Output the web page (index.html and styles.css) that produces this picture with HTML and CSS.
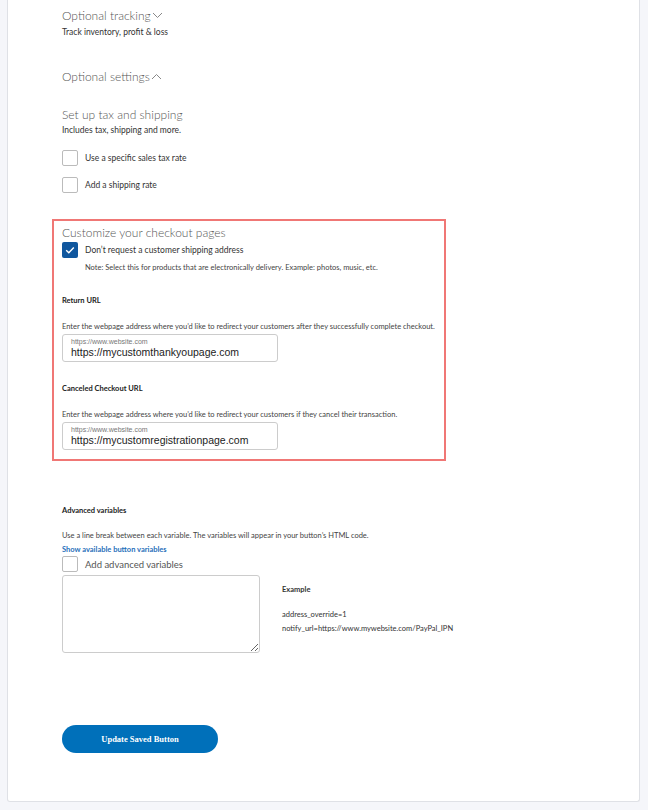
FILE: index.html
```html
<!DOCTYPE html>
<html lang="en">
<head>
  <meta charset="UTF-8" />
  <title>Edit Saved Button</title>
  <meta name="viewport" content="width=device-width, initial-scale=1.0" />
  <link rel="stylesheet" href="styles.css">
</head>
<body>
  <div class="card">
    <div class="toggle-title">Optional tracking
      <svg class="chevron" width="11" height="7" viewBox="0 0 11 7"><path d="M1 1l4.5 4.5L10 1" fill="none" stroke="#888" stroke-width="1"/></svg>
    </div>
    <div class="toggle-sub">Track inventory, profit &amp; loss</div>

    <div class="toggle-title second">Optional settings
      <svg class="chevron" width="11" height="7" viewBox="0 0 11 7"><path d="M1 6l4.5-4.5L10 6" fill="none" stroke="#888" stroke-width="1"/></svg>
    </div>

    <div class="section-title tax">Set up tax and shipping</div>
    <div class="section-sub">Includes tax, shipping and more.</div>

    <label class="check-row first-check"><span class="box"></span>Use a specific sales tax rate</label>
    <label class="check-row second-check"><span class="box"></span>Add a shipping rate</label>

    <div class="highlight">
      <div class="section-title">Customize your checkout pages</div>
      <label class="check-row checked-row">
        <span class="box checked">
          <svg width="16" height="16" viewBox="0 0 16 16"><path d="M4.2 8.3l2.6 2.5 5-5.4" fill="none" stroke="#fff" stroke-width="1.4"/></svg>
        </span>Don’t request a customer shipping address
      </label>
      <div class="note">Note: Select this for products that are electronically delivery. Example: photos, music, etc.</div>

      <div class="field-label">Return URL</div>
      <div class="field-desc">Enter the webpage address where you’d like to redirect your customers after they successfully complete checkout.</div>
      <div class="url-input">
        <span class="url-hint">https://www.website.com</span>
        <span class="url-value">https://mycustomthankyoupage.com</span>
      </div>

      <div class="field-label">Canceled Checkout URL</div>
      <div class="field-desc">Enter the webpage address where you’d like to redirect your customers if they cancel their transaction.</div>
      <div class="url-input">
        <span class="url-hint">https://www.website.com</span>
        <span class="url-value">https://mycustomregistrationpage.com</span>
      </div>
    </div>

    <div class="field-label advanced">Advanced variables</div>
    <div class="field-desc adv-desc">Use a line break between each variable. The variables will appear in your button’s HTML code.</div>
    <a class="vars-link" href="#">Show available button variables</a>
    <label class="check-row adv-check"><span class="box"></span>Add advanced variables</label>

    <div class="vars">
      <textarea class="vars-box"></textarea>
      <div class="example">
        <div class="example-title">Example</div>
        <div class="example-line first-line">address_override=1</div>
        <div class="example-line">notify_url=https://www.mywebsite.com/PayPal_IPN</div>
      </div>
    </div>

    <button type="button" class="save-btn">Update Saved Button</button>
  </div>
</body>
</html>
```

FILE: styles.css
```css
body {
  margin: 0;
  background: #f5f6fa;
  font-family: Lato, "Open Sans", sans-serif;
  color: #333;
}

.card {
  margin: 0 8px 7px 7px;
  padding: 8px 0 48px 54px;
  background: #fff;
  border: 1px solid #dfe1e6;
  border-top: none;
  border-radius: 0 0 3px 3px;
}

.toggle-title,
.section-title {
  font-size: 12px;
  font-weight: 300;
  line-height: 16px;
  color: #555;
}

.chevron {
  vertical-align: 1px;
  margin-left: -2px;
}

.toggle-title.second {
  margin-top: 31px;
}

.toggle-sub,
.section-sub {
  font-size: 8.5px;
  line-height: 12px;
  margin-top: 2px;
  color: #333;
}

.section-title.tax {
  margin-top: 22px;
}

.section-sub {
  margin-top: 1px;
}

.check-row {
  display: flex;
  align-items: center;
  height: 16px;
  font-size: 8.5px;
  color: #333;
}

.box {
  width: 14px;
  height: 14px;
  border: 1px solid #bbb;
  border-radius: 2px;
  margin-right: 7px;
  flex-shrink: 0;
}

.box.checked {
  width: 16px;
  height: 16px;
  border: none;
  background: #10579e;
}

.first-check {
  margin-top: 14px;
}

.second-check {
  margin-top: 11px;
}

.highlight {
  margin: 26px 0 0 -10px;
  width: 374px;
  padding: 4px 8px 9px 8px;
  border: 2px solid #f07775;
}

.checked-row {
  margin-top: 1px;
}

.note {
  font-size: 7.5px;
  line-height: 12px;
  margin: 4px 0 0 23px;
  color: #444;
}

.field-label {
  font-size: 7.5px;
  font-weight: 700;
  line-height: 12px;
  margin-top: 21px;
  color: #222;
}

.field-desc {
  font-size: 7.5px;
  line-height: 12px;
  margin-top: 14px;
  color: #444;
  white-space: nowrap;
}

.url-input {
  display: flex;
  flex-direction: column;
  justify-content: center;
  width: 198px;
  height: 26px;
  margin-top: 1px;
  padding: 0 8px;
  border: 1px solid #ccc;
  border-radius: 3px;
  font-family: "Liberation Sans", Arial, sans-serif;
}

.url-hint {
  font-size: 7px;
  line-height: 9px;
  color: #777;
}

.url-value {
  font-size: 10.5px;
  line-height: 13px;
  color: #222;
}

.field-label.advanced {
  margin-top: 44px;
}

.field-desc.adv-desc {
  margin-top: 13px;
}

.vars-link {
  display: block;
  margin-top: 2px;
  font-size: 7.5px;
  font-weight: 700;
  line-height: 12px;
  color: #1f6fba;
  text-decoration: none;
}

.adv-check {
  margin-top: 0;
  font-size: 9.5px;
  color: #555;
}

.vars {
  display: flex;
  gap: 22px;
  margin-top: 3px;
}

.vars-box {
  width: 198px;
  height: 78px;
  box-sizing: border-box;
  border: 1px solid #ccc;
  border-radius: 3px;
  margin: 0;
}

.example {
  padding-top: 9px;
  font-size: 7.5px;
  line-height: 14px;
  color: #333;
}

.example-title {
  font-weight: 700;
  line-height: 12px;
}

.example-line.first-line {
  margin-top: 12px;
}

.save-btn {
  display: block;
  margin-top: 72px;
  width: 156px;
  height: 28px;
  border: none;
  border-radius: 14px;
  background: #0070ba;
  color: #fff;
  font-family: "Liberation Serif", serif;
  font-weight: 700;
  font-size: 8.5px;
  cursor: pointer;
}
```
